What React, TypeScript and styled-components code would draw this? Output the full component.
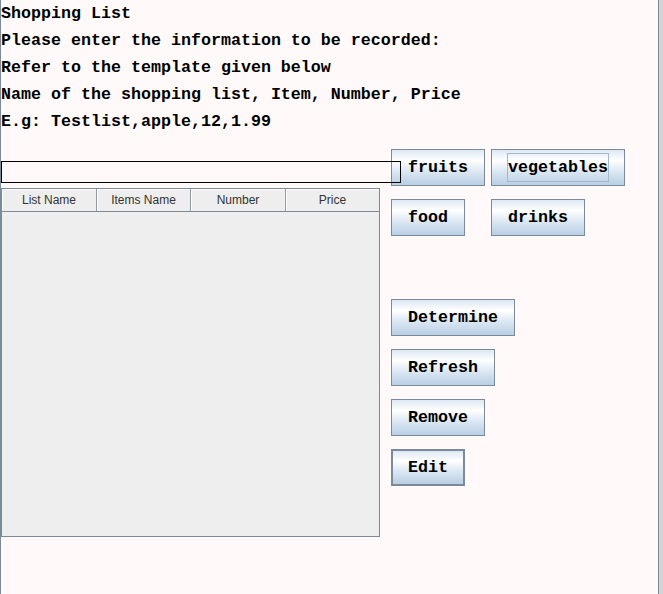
import React from 'react';
import styled, { createGlobalStyle } from 'styled-components';

const mono = `"Liberation Mono", "DejaVu Sans Mono", monospace`;

const GlobalStyle = createGlobalStyle`
  html, body {
    margin: 0;
    padding: 0;
    background: #d4d4d4;
    overflow: hidden;
  }
  #root {
    width: 663px;
    height: 594px;
  }
`;

const Frame = styled.div`
  box-sizing: border-box;
  width: 659px;
  height: 594px;
  background: #fffaf9;
  border-left: 1px solid #7a8a99;
  border-right: 1px solid #7a8a99;
  font-family: ${mono};
  color: #000;
`;

const Instructions = styled.div`
  display: flex;
  flex-direction: column;
`;

const Line = styled.div`
  height: 27px;
  line-height: 27px;
  font-size: 16.67px;
  font-weight: bold;
  white-space: pre;
`;

const Workspace = styled.div`
  display: grid;
  grid-template-columns: 390px auto;
  align-items: start;
  padding-top: 14px;
`;

const LeftColumn = styled.div`
  display: flex;
  flex-direction: column;
  gap: 5px;
  padding-top: 12px;
`;

const Entry = styled.input`
  position: relative;
  z-index: 1;
  box-sizing: border-box;
  width: 400px;
  height: 22px;
  margin: 0;
  padding: 0 3px;
  border: 1px solid #000;
  border-radius: 0;
  background: transparent;
  font-family: ${mono};
  font-size: 14px;
  outline: none;
`;

const Table = styled.div`
  box-sizing: border-box;
  width: 379px;
  height: 349px;
  border: 1px solid #7a8a99;
  background: #eeeeee;
  display: flex;
  flex-direction: column;
`;

const HeaderRow = styled.div`
  box-sizing: border-box;
  display: grid;
  grid-template-columns: 95px 94px 95px 93px;
  height: 23px;
  border-bottom: 1px solid #7a8a99;
`;

const HeaderCell = styled.div<{ $last?: boolean }>`
  box-sizing: border-box;
  display: flex;
  align-items: center;
  justify-content: center;
  border-right: ${p => (p.$last ? 'none' : '1px solid #8d99a6')};
  box-shadow: inset 1px 1px 0 #ffffff;
  font-family: "Liberation Sans", Arial, sans-serif;
  font-size: 12px;
  color: #333333;
`;

const ButtonPanel = styled.div`
  display: flex;
  flex-direction: column;
  gap: 13px;
`;

const ButtonRow = styled.div`
  display: grid;
  grid-template-columns: 100px auto;
  justify-items: start;
  height: 37px;
`;

const Button = styled.button<{ $default?: boolean }>`
  box-sizing: border-box;
  height: 37px;
  margin: 0;
  padding: 0 ${p => (p.$default ? 14 : 15)}px;
  border: ${p => (p.$default ? 2 : 1)}px solid #7a8a99;
  border-radius: 0;
  background: linear-gradient(
    180deg,
    #dde8f3 0%,
    #ffffff 30%,
    #dde8f3 60%,
    #b8cfe5 100%
  );
  display: flex;
  align-items: center;
  font-family: ${mono};
  font-size: 16.67px;
  font-weight: bold;
  color: #000;
  cursor: pointer;
`;

const Caption = styled.span<{ $focused?: boolean }>`
  box-sizing: border-box;
  height: 29px;
  display: flex;
  align-items: center;
  border: 1px solid ${p => (p.$focused ? '#a3b8cc' : 'transparent')};
  white-space: pre;
`;

const lines = [
  'Shopping List',
  'Please enter the information to be recorded:',
  'Refer to the template given below',
  'Name of the shopping list, Item, Number, Price',
  'E.g: Testlist,apple,12,1.99',
];

const columns = ['List Name', 'Items Name', 'Number', 'Price'];

const Btn: React.FC<{ label: string; focused?: boolean; isDefault?: boolean }> = ({
  label,
  focused,
  isDefault,
}) => (
  <Button $default={isDefault}>
    <Caption $focused={focused}>{label}</Caption>
  </Button>
);

export default function App() {
  return (
    <>
      <GlobalStyle />
      <Frame>
        <Instructions>
          {lines.map(l => (
            <Line key={l}>{l}</Line>
          ))}
        </Instructions>
        <Workspace>
          <LeftColumn>
            <Entry type="text" />
            <Table>
              <HeaderRow>
                {columns.map((c, i) => (
                  <HeaderCell key={c} $last={i === columns.length - 1}>
                    {c}
                  </HeaderCell>
                ))}
              </HeaderRow>
            </Table>
          </LeftColumn>
          <ButtonPanel>
            <ButtonRow>
              <Btn label="fruits" />
              <Btn label="vegetables" focused />
            </ButtonRow>
            <ButtonRow>
              <Btn label="food" />
              <Btn label="drinks" />
            </ButtonRow>
            <ButtonRow />
            <ButtonRow>
              <Btn label="Determine" />
            </ButtonRow>
            <ButtonRow>
              <Btn label="Refresh" />
            </ButtonRow>
            <ButtonRow>
              <Btn label="Remove" />
            </ButtonRow>
            <ButtonRow>
              <Btn label="Edit" isDefault />
            </ButtonRow>
          </ButtonPanel>
        </Workspace>
      </Frame>
    </>
  );
}
